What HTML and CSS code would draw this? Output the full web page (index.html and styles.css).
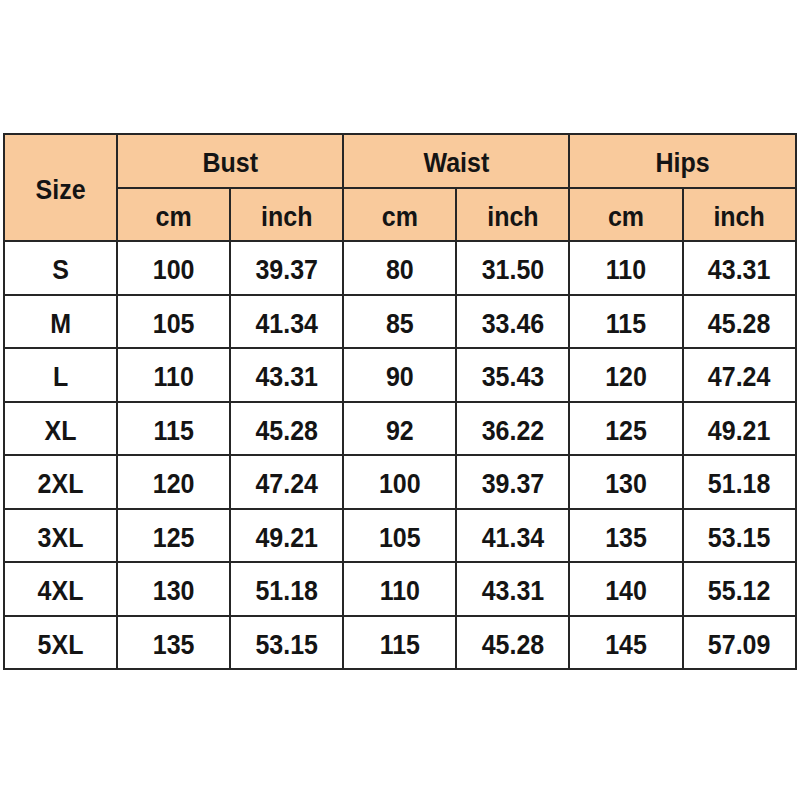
FILE: index.html
```html
<!DOCTYPE html>
<html>
<head>
<meta charset="utf-8">
<link rel="stylesheet" href="styles.css">
</head>
<body>
<div class="page">
<table class="chart">
<colgroup>
<col class="c"><col class="c"><col class="c"><col class="c"><col class="c"><col class="c"><col class="c">
</colgroup>
<thead>
<tr><th rowspan="2"><span class="t">Size</span></th><th colspan="2"><span class="t">Bust</span></th><th colspan="2"><span class="t">Waist</span></th><th colspan="2"><span class="t">Hips</span></th></tr>
<tr><th><span class="t">cm</span></th><th><span class="t">inch</span></th><th><span class="t">cm</span></th><th><span class="t">inch</span></th><th><span class="t">cm</span></th><th><span class="t">inch</span></th></tr>
</thead>
<tbody>
<tr><td><span class="t">S</span></td><td><span class="t">100</span></td><td><span class="t">39.37</span></td><td><span class="t">80</span></td><td><span class="t">31.50</span></td><td><span class="t">110</span></td><td><span class="t">43.31</span></td></tr>
<tr><td><span class="t">M</span></td><td><span class="t">105</span></td><td><span class="t">41.34</span></td><td><span class="t">85</span></td><td><span class="t">33.46</span></td><td><span class="t">115</span></td><td><span class="t">45.28</span></td></tr>
<tr><td><span class="t">L</span></td><td><span class="t">110</span></td><td><span class="t">43.31</span></td><td><span class="t">90</span></td><td><span class="t">35.43</span></td><td><span class="t">120</span></td><td><span class="t">47.24</span></td></tr>
<tr><td><span class="t">XL</span></td><td><span class="t">115</span></td><td><span class="t">45.28</span></td><td><span class="t">92</span></td><td><span class="t">36.22</span></td><td><span class="t">125</span></td><td><span class="t">49.21</span></td></tr>
<tr><td><span class="t">2XL</span></td><td><span class="t">120</span></td><td><span class="t">47.24</span></td><td><span class="t">100</span></td><td><span class="t">39.37</span></td><td><span class="t">130</span></td><td><span class="t">51.18</span></td></tr>
<tr><td><span class="t">3XL</span></td><td><span class="t">125</span></td><td><span class="t">49.21</span></td><td><span class="t">105</span></td><td><span class="t">41.34</span></td><td><span class="t">135</span></td><td><span class="t">53.15</span></td></tr>
<tr><td><span class="t">4XL</span></td><td><span class="t">130</span></td><td><span class="t">51.18</span></td><td><span class="t">110</span></td><td><span class="t">43.31</span></td><td><span class="t">140</span></td><td><span class="t">55.12</span></td></tr>
<tr><td><span class="t">5XL</span></td><td><span class="t">135</span></td><td><span class="t">53.15</span></td><td><span class="t">115</span></td><td><span class="t">45.28</span></td><td><span class="t">145</span></td><td><span class="t">57.09</span></td></tr>
</tbody>
</table>
</div>
</body>
</html>
```
FILE: styles.css
```css
html, body {
  margin: 0;
  padding: 0;
  background: #ffffff;
}
.page {
  padding: 133px 0 0 3px;
}
.chart {
  border-collapse: collapse;
  table-layout: fixed;
  width: 792px;
  font-family: "Liberation Sans", Arial, sans-serif;
  font-weight: bold;
  font-size: 25px;
  color: #141414;
}
.chart .c {
  width: 113.1px;
}
.chart th,
.chart td {
  border: 2px solid #262626;
  height: 51.5px;
  padding: 0;
  text-align: center;
  vertical-align: middle;
  font-weight: bold;
}
.chart th {
  background: #f9ca9c;
}
.chart tbody td {
  background: #ffffff;
}
.t {
  display: inline-block;
  transform: scaleY(1.1);
  position: relative;
  top: 2px;
}
```
